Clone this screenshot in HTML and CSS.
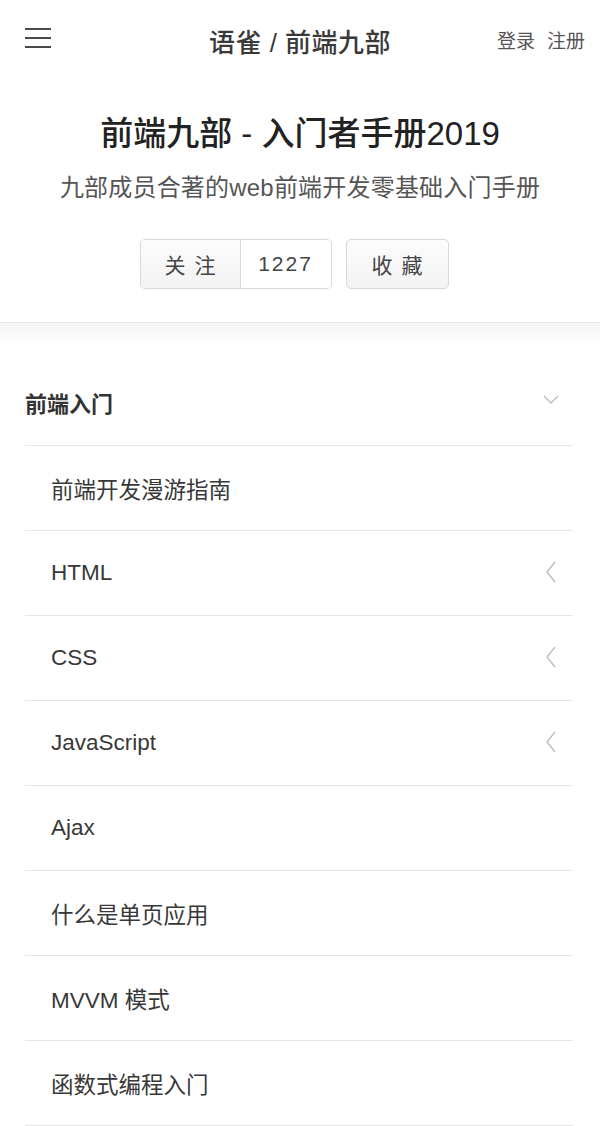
FILE: index.html
```html
<!DOCTYPE html>
<html lang="zh-CN">
<head>
<meta charset="utf-8">
<title>前端九部 - 入门者手册2019</title>
<link rel="stylesheet" href="styles.css">
</head>
<body>
<header class="topbar">
  <div class="menu" aria-label="menu"><span></span><span></span><span></span></div>
  <div class="brand">语雀 / 前端九部</div>
  <nav class="auth"><a>登录</a><a>注册</a></nav>
</header>
<section class="hero">
  <h1 class="book-title">前端九部 - 入门者手册2019</h1>
  <p class="book-desc">九部成员合著的web前端开发零基础入门手册</p>
  <div class="actions">
    <div class="btn-group">
      <span class="btn btn-follow">关注</span>
      <span class="btn btn-count">1227</span>
    </div>
    <span class="btn btn-collect">收藏</span>
  </div>
</section>
<div class="band"></div>
<main class="toc">
  <div class="toc-row section">
    <span>前端入门</span>
    <svg class="chev" width="18" height="14" viewBox="0 0 18 14"><polyline points="2,4 9,11 16,4" fill="none" stroke="#bdbdbd" stroke-width="1.4"/></svg>
  </div>
  <div class="toc-row item"><span>前端开发漫游指南</span></div>
  <div class="toc-row item"><span>HTML</span><svg class="chev" width="14" height="24" viewBox="0 0 14 24"><polyline points="11,2 3,12 11,22" fill="none" stroke="#bdbdbd" stroke-width="1.4"/></svg></div>
  <div class="toc-row item"><span>CSS</span><svg class="chev" width="14" height="24" viewBox="0 0 14 24"><polyline points="11,2 3,12 11,22" fill="none" stroke="#bdbdbd" stroke-width="1.4"/></svg></div>
  <div class="toc-row item"><span>JavaScript</span><svg class="chev" width="14" height="24" viewBox="0 0 14 24"><polyline points="11,2 3,12 11,22" fill="none" stroke="#bdbdbd" stroke-width="1.4"/></svg></div>
  <div class="toc-row item"><span>Ajax</span></div>
  <div class="toc-row item"><span>什么是单页应用</span></div>
  <div class="toc-row item"><span>MVVM 模式</span></div>
  <div class="toc-row item"><span>函数式编程入门</span></div>
</main>
</body>
</html>
```

FILE: styles.css
```css
* { box-sizing: border-box; }
html, body { margin: 0; padding: 0; background: #fff; }
body {
  font-family: "Liberation Sans", "Noto Sans CJK SC", sans-serif;
  color: #333;
  width: 600px;
  overflow: hidden;
}
.topbar {
  height: 80px;
  display: grid;
  grid-template-columns: 1fr auto 1fr;
  align-items: center;
  padding: 0 20px;
}
.menu {
  display: flex;
  flex-direction: column;
  gap: 7px;
  width: 26px;
  margin-top: -5px;
  margin-left: 5px;
}
.menu span { display: block; height: 2px; background: #4a4a4a; }
.brand {
  font-size: 26px;
  font-weight: 500;
  color: #3a3a3a;
  letter-spacing: 0.5px;
}
.auth {
  justify-self: end;
  display: flex;
  gap: 12px;
  font-size: 19px;
  color: #555;
  margin-top: -2px;
  margin-right: -5px;
}
.hero {
  display: flex;
  flex-direction: column;
  align-items: center;
  padding: 34px 0 33px;
}
.book-title {
  margin: 0;
  font-size: 33px;
  line-height: 40px;
  font-weight: 500;
  color: #222;
}
.book-desc {
  margin: 18px 0 0;
  font-size: 24px;
  line-height: 32px;
  color: #555;
  letter-spacing: 0.2px;
}
.actions {
  margin-top: 35px;
  display: flex;
  gap: 14px;
  margin-right: 12px;
}
.btn-group {
  display: flex;
  border: 1px solid #d8d8d8;
  border-radius: 5px;
  overflow: hidden;
}
.btn {
  height: 48px;
  display: flex;
  align-items: center;
  justify-content: center;
  font-size: 21px;
  color: #444;
}
.btn-follow {
  width: 100px;
  letter-spacing: 9px;
  padding-left: 9px;
  background: linear-gradient(#fcfcfc, #f3f3f3);
  border-right: 1px solid #dcdcdc;
}
.btn-count {
  width: 90px;
  letter-spacing: 2px;
  background: #fff;
}
.btn-collect {
  height: 50px;
  width: 103px;
  border: 1px solid #d8d8d8;
  border-radius: 5px;
  letter-spacing: 9px;
  padding-left: 9px;
  background: linear-gradient(#fcfcfc, #f3f3f3);
}
.band {
  height: 21px;
  border-top: 1px solid #e6e6e6;
  background: linear-gradient(#f5f5f5, #fafafa 70%, #fff);
}
.toc {
  margin: 0 27px 0 25px;
  padding-top: 18px;
}
.toc-row {
  height: 85px;
  display: flex;
  align-items: center;
  justify-content: space-between;
  border-bottom: 1px solid #e6e6e6;
}
.section {
  font-size: 22px;
  font-weight: 700;
  color: #333;
  padding-bottom: 2px;
}
.section .chev { margin-right: 13px; margin-top: -6px; }
.item {
  padding-left: 26px;
  font-size: 22.5px;
  color: #383838;
}
.item .chev { margin-right: 15px; margin-top: -2px; }
```
